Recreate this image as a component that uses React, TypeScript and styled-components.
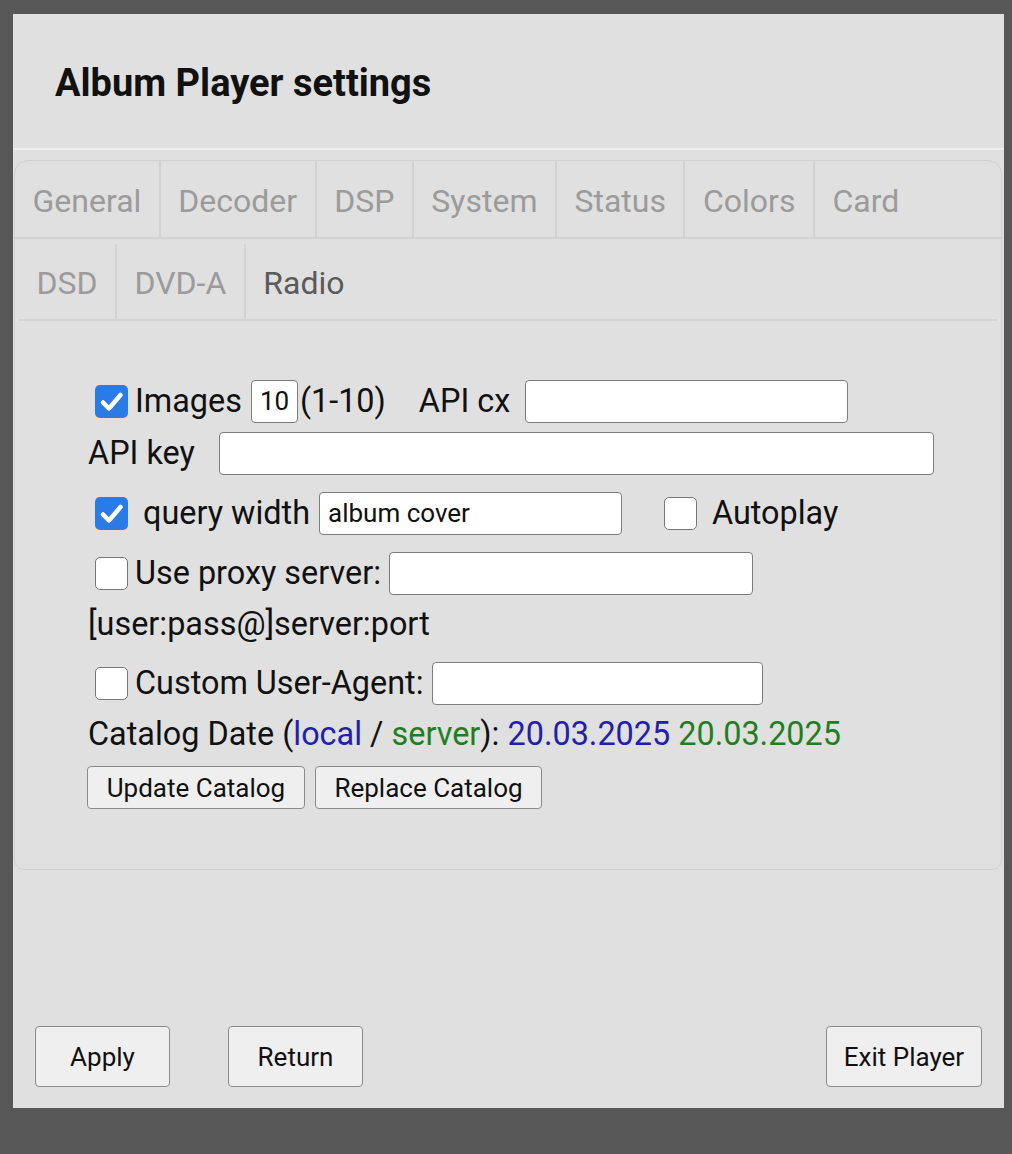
import React from "react";
import styled, { createGlobalStyle } from "styled-components";

const GlobalStyle = createGlobalStyle`
  html, body {
    margin: 0;
    padding: 0;
    background: #575757;
    font-family: Roboto, "Liberation Sans", sans-serif;
  }
  * { box-sizing: border-box; }
`;

const Page = styled.div`
  width: 1012px;
  height: 1154px;
  padding: 14px 8px 0 13px;
  background: #575757;
`;

const Dialog = styled.div`
  width: 991px;
  height: 1094px;
  background: #e0e0e0;
  display: flex;
  flex-direction: column;
`;

const Header = styled.div`
  height: 136px;
  display: flex;
  align-items: center;
  padding-left: 42px;
  padding-top: 4px;
  border-bottom: 2px solid #efefef;
`;

const Title = styled.h2`
  margin: 0;
  font-size: 38px;
  font-weight: 700;
  color: #111;
`;

const TabPanel = styled.div`
  margin: 10px 2px 0 1px;
  height: 710px;
  border: 1px solid #d0d0d0;
  border-radius: 14px 14px 10px 10px;
  display: flex;
  flex-direction: column;
`;

const TabRow = styled.div<{ $inset?: boolean }>`
  display: flex;
  height: ${(p) => (p.$inset ? "82px" : "78px")};
  margin: ${(p) => (p.$inset ? "0 4px 0 4px" : "0")};
  border-bottom: 2px solid #d2d2d2;
`;

const Tab = styled.div<{ $active?: boolean; $inset?: boolean }>`
  display: flex;
  align-items: center;
  padding: ${(p) => (p.$inset ? "2px" : "4px")} 17.5px 0 17.5px;
  margin-top: ${(p) => (p.$inset ? "5px" : "0")};
  font-size: 32px;
  color: ${(p) => (p.$active ? "#5a5a5a" : "#9b9b9b")};
  &:not(:last-child) {
    border-right: 2px solid #d2d2d2;
  }
`;

const Content = styled.div`
  padding: 0 0 0 73px;
  display: flex;
  flex-direction: column;
  color: #111;
  font-size: 32.4px;
`;

const Row = styled.div<{ $top: number; $h: number }>`
  display: flex;
  align-items: center;
  margin-top: ${(p) => p.$top}px;
  height: ${(p) => p.$h}px;
  white-space: nowrap;
`;

const Text = styled.span<{ $ml?: number }>`
  margin-left: ${(p) => p.$ml ?? 0}px;
  line-height: 1;
`;

const Colored = styled.span<{ $c: "blue" | "green" }>`
  color: ${(p) => (p.$c === "blue" ? "#1f20ab" : "#1e7f1e")};
`;

const Box = styled.span<{ $checked?: boolean; $ml?: number }>`
  display: inline-flex;
  align-items: center;
  justify-content: center;
  width: 33px;
  height: 33px;
  flex: none;
  margin-left: ${(p) => p.$ml ?? 7}px;
  border-radius: 5px;
  background: ${(p) => (p.$checked ? "#2b7be6" : "#ffffff")};
  border: ${(p) => (p.$checked ? "none" : "1.5px solid #787878")};
`;

const Field = styled.div<{ $w: number; $ml?: number; $h?: number }>`
  width: ${(p) => p.$w}px;
  height: ${(p) => p.$h ?? 43}px;
  margin-left: ${(p) => p.$ml ?? 0}px;
  flex: none;
  background: #fff;
  border: 1px solid #7d7d7d;
  border-radius: 4px;
  font-size: 26px;
  display: flex;
  align-items: center;
  padding-left: 8px;
  color: #111;
`;

const Btn = styled.button<{ $w: number; $h: number; $ml?: number }>`
  width: ${(p) => p.$w}px;
  height: ${(p) => p.$h}px;
  margin-left: ${(p) => p.$ml ?? 0}px;
  flex: none;
  background: #efefef;
  border: 1px solid #8a8a8a;
  border-radius: 4px;
  font-family: Roboto, "Liberation Sans", sans-serif;
  font-size: 26px;
  color: #111;
  padding: 0;
`;

const Footer = styled.div`
  margin-top: auto;
  display: flex;
  align-items: center;
  padding: 0 22px 21px 22px;
`;

const Spacer = styled.div`
  flex: 1;
`;

const Check = ({ checked, ml }: { checked?: boolean; ml?: number }) => (
  <Box $checked={checked} $ml={ml}>
    {checked && (
      <svg width="33" height="33" viewBox="0 0 33 33">
        <path
          d="M8 17.5 L14 23.5 L25.5 10"
          fill="none"
          stroke="#fff"
          strokeWidth="4.5"
          strokeLinecap="round"
          strokeLinejoin="round"
        />
      </svg>
    )}
  </Box>
);

export default function App() {
  const row1 = ["General", "Decoder", "DSP", "System", "Status", "Colors", "Card"];
  const row2 = ["DSD", "DVD-A", "Radio"];
  return (
    <>
      <GlobalStyle />
      <Page>
        <Dialog>
          <Header>
            <Title>Album Player settings</Title>
          </Header>
          <TabPanel>
            <TabRow>
              {row1.map((t) => (
                <Tab key={t}>{t}</Tab>
              ))}
            </TabRow>
            <TabRow $inset>
              {row2.map((t) => (
                <Tab key={t} $inset $active={t === "Radio"}>
                  {t}
                </Tab>
              ))}
            </TabRow>
            <Content>
              <Row $top={58} $h={44}>
                <Check checked />
                <Text $ml={7}>Images</Text>
                <Field $w={47} $ml={9} $h={43}>10</Field>
                <Text $ml={2}>(1-10)</Text>
                <Text $ml={33}>API cx</Text>
                <Field $w={323} $ml={15} />
              </Row>
              <Row $top={8} $h={44}>
                <Text>API key</Text>
                <Field $w={715} $ml={24} />
              </Row>
              <Row $top={16} $h={44}>
                <Check checked />
                <Text $ml={15}>query width</Text>
                <Field $w={303} $ml={9}>album cover</Field>
                <Check ml={42} />
                <Text $ml={15}>Autoplay</Text>
              </Row>
              <Row $top={16} $h={44}>
                <Check />
                <Text $ml={7}>Use proxy server:</Text>
                <Field $w={364} $ml={8} />
              </Row>
              <Row $top={9} $h={40}>
                <Text>[user:pass@]server:port</Text>
              </Row>
              <Row $top={17} $h={44}>
                <Check />
                <Text $ml={7}>Custom User-Agent:</Text>
                <Field $w={331} $ml={8} />
              </Row>
              <Row $top={9} $h={40}>
                <Text>
                  Catalog Date (<Colored $c="blue">local</Colored> /{" "}
                  <Colored $c="green">server</Colored>):{" "}
                  <Colored $c="blue">20.03.2025</Colored>{" "}
                  <Colored $c="green">20.03.2025</Colored>
                </Text>
              </Row>
              <Row $top={12} $h={43}>
                <Btn $w={218} $h={43} $ml={-1}>Update Catalog</Btn>
                <Btn $w={227} $h={43} $ml={10}>Replace Catalog</Btn>
              </Row>
            </Content>
          </TabPanel>
          <Footer>
            <Btn $w={135} $h={61}>Apply</Btn>
            <Btn $w={135} $h={61} $ml={58}>Return</Btn>
            <Spacer />
            <Btn $w={156} $h={61}>Exit Player</Btn>
          </Footer>
        </Dialog>
      </Page>
    </>
  );
}
